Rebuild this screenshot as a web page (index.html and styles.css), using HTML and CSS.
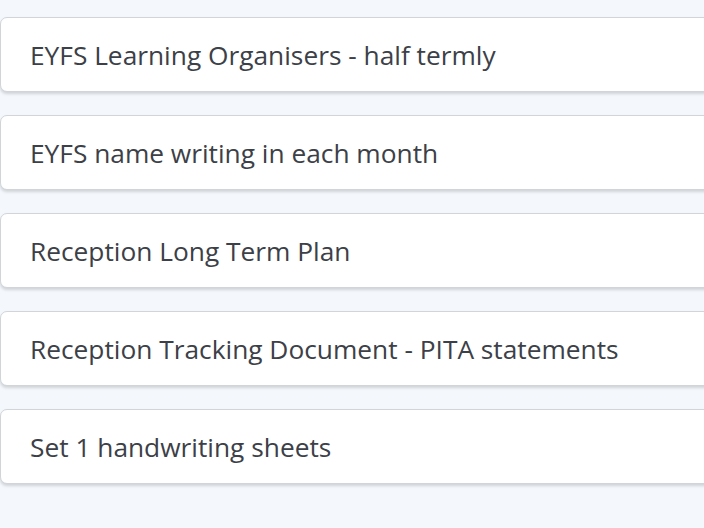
FILE: index.html
```html
<!DOCTYPE html>
<html lang="en">
<head>
	<meta charset="utf-8">
	<title>Resources</title>
	<link rel="stylesheet" href="styles.css">
</head>
<body>
	<ul class="list">
		<li class="card">EYFS Learning Organisers - half termly</li>
		<li class="card">EYFS name writing in each month</li>
		<li class="card">Reception Long Term Plan</li>
		<li class="card">Reception Tracking Document - PITA statements</li>
		<li class="card">Set 1 handwriting sheets</li>
	</ul>
</body>
</html>
```

FILE: styles.css
```css
*{
	margin: 0;
	padding: 0;
	box-sizing: border-box;
}
html, body{
	height: 100%;
	overflow: hidden;
}
body{
	background: #f4f8fc;
	font-family: "Open Sans", "Noto Sans", sans-serif;
	color: #3c4047;
}
ul{
	list-style: none
}
.list{
	display: flex;
	flex-direction: column;
	gap: 23px;
	padding-top: 17px;
	width: 720px;
}
.card{
	height: 75px;
	display: flex;
	align-items: center;
	padding-left: 29px;
	background: #fff;
	border: 1px solid #d1d5da;
	border-radius: 7px;
	box-shadow: 0 2px 3px rgba(0, 0, 0, 0.15);
	font-size: 26.3px;
}
```
